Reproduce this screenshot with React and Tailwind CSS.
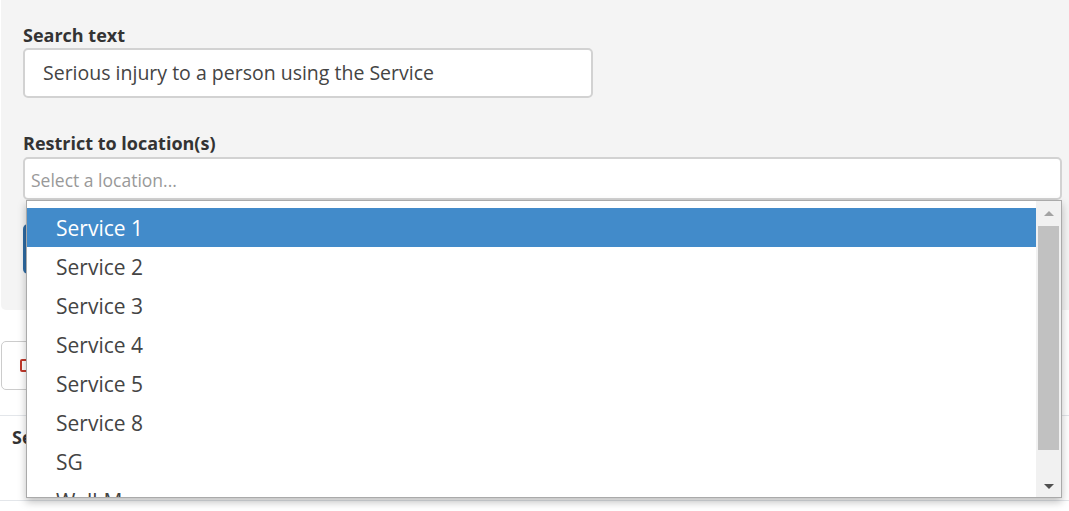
import React from "react";

const locations = ["Service 1", "Service 2", "Service 3", "Service 4", "Service 5", "Service 8", "SG", "WalkMe"];

const LocationDropdown = () => (
  <div className="absolute left-[26px] top-[200px] w-[1036px] h-[298px] bg-white border border-[#aaa] shadow-[0_4px_8px_rgba(0,0,0,0.25)] flex overflow-hidden">
    <ul className="flex-1 pt-[7px]">
      {locations.map((loc, i) => (
        <li
          key={loc}
          className={
            i === 0
              ? "h-[39px] pl-[29px] pt-[2px] flex items-center text-[21px] bg-[#428bca] text-white"
              : "h-[39px] pl-[29px] pt-[2px] flex items-center text-[21px] text-[#444]"
          }
        >
          {loc}
        </li>
      ))}
    </ul>
    {/* scrollbar */}
    <div className="w-[25px] bg-[#f1f1f1] flex flex-col items-center">
      <div className="h-[25px] flex items-center justify-center">
        <div className="w-0 h-0 border-l-[5px] border-r-[5px] border-b-[5px] border-l-transparent border-r-transparent border-b-[#a3a3a3]" />
      </div>
      <div className="w-[21px] h-[224px] bg-[#c1c1c1]" />
      <div className="flex-1 flex items-end justify-center pb-[8px]">
        <div className="w-0 h-0 border-l-[5px] border-r-[5px] border-t-[5px] border-l-transparent border-r-transparent border-t-[#505050]" />
      </div>
    </div>
  </div>
);

const App = () => {
  return (
    <div className="relative w-[1069px] h-[511px] bg-white overflow-hidden font-['Open_Sans',sans-serif] text-[#333]">
      {/* Search panel */}
      <div className="ml-[1px] bg-[#f4f4f4] rounded-bl-[5px] px-[22px] pt-[23px] h-[310px]">
        <label className="block text-[18px] font-bold leading-[24px] text-[#333]">Search text</label>
        <div className="mt-[1px] w-[570px] h-[50px] bg-white border-2 border-[#d2d2d2] rounded-[5px] flex items-center pl-[18px] text-[19.5px] text-[#444]">
          Serious injury to a person using the Service
        </div>

        <label className="block mt-[33px] text-[18px] font-bold leading-[24px] text-[#333]">Restrict to location(s)</label>
        <div className="mt-[2px] w-[1039px] h-[43px] bg-white border-2 border-[#d2d2d2] rounded-[5px] flex items-center pl-[6px] pt-[4px] text-[17.5px] text-[#999]">
          Select a location...
        </div>

        <button className="mt-[24px] w-[140px] h-[50px] rounded-[5px] bg-[#2f6ba3] text-white text-[16px] font-semibold">
          Search
        </button>
      </div>

      {/* Results toolbar */}
      <div className="mt-[31px] ml-[1px]">
        <button className="h-[49px] w-[150px] border border-[#ccc] rounded-[5px] bg-white flex items-center pl-[18px] gap-2">
          <span className="w-[9px] h-[13px] border-2 border-[#c0392b] rounded-[2px]" />
          <span className="text-[16px] text-[#333]">Clear</span>
        </button>
      </div>

      <div className="mt-[25px] border-t border-[#e3e6ea]">
        <div className="pl-[12px] pt-[8px] h-[84px] text-[18px] font-bold text-[#333]">Search results</div>
      </div>
      <div className="border-t border-[#e3e6ea]" />

      <LocationDropdown />
    </div>
  );
};

export default App;
